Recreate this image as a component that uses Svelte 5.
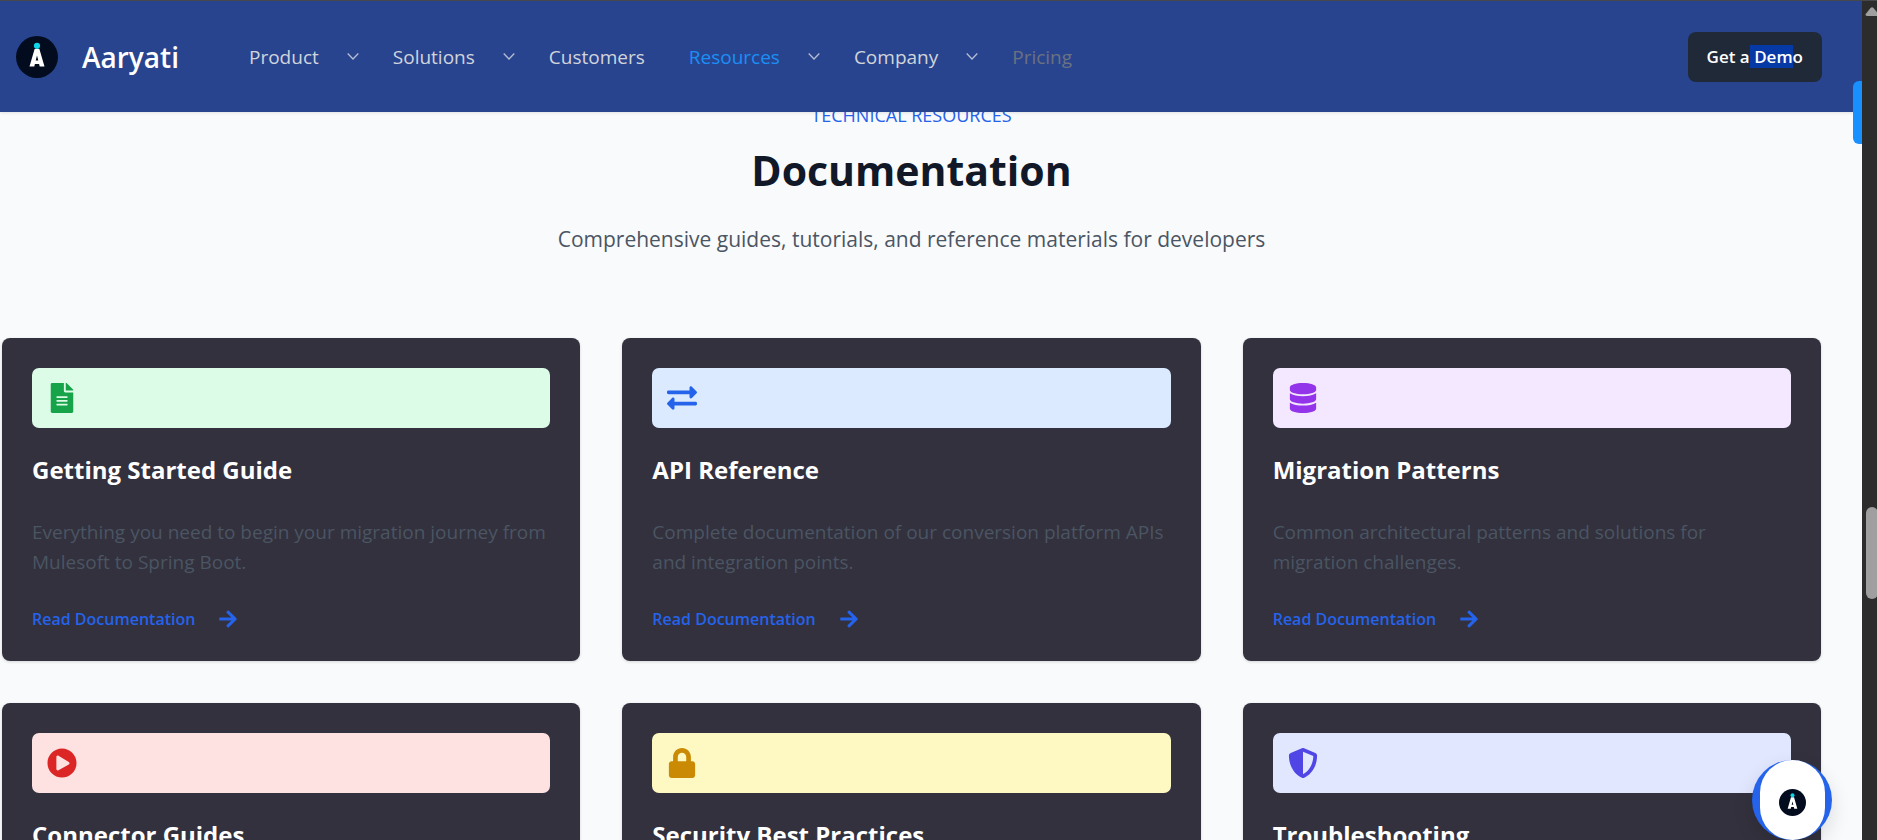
<script>
  const nav = [
    { label: 'Product', menu: true },
    { label: 'Solutions', menu: true },
    { label: 'Customers', menu: false },
    { label: 'Resources', menu: true, state: 'active' },
    { label: 'Company', menu: true },
    { label: 'Pricing', menu: false, state: 'muted' }
  ];

  const cards = [
    {
      title: 'Getting Started Guide',
      text: 'Everything you need to begin your migration journey from Mulesoft to Spring Boot.',
      tone: 'green',
      box: '-64 0 512 512',
      path: 'M224 136V0H24C10.7 0 0 10.7 0 24v464c0 13.3 10.7 24 24 24h336c13.3 0 24-10.7 24-24V160H248c-13.2 0-24-10.8-24-24zm64 236c0 6.6-5.4 12-12 12H108c-6.6 0-12-5.4-12-12v-8c0-6.6 5.4-12 12-12h168c6.6 0 12 5.4 12 12v8zm0-64c0 6.6-5.4 12-12 12H108c-6.6 0-12-5.4-12-12v-8c0-6.6 5.4-12 12-12h168c6.6 0 12 5.4 12 12v8zm0-72v8c0 6.6-5.4 12-12 12H108c-6.6 0-12-5.4-12-12v-8c0-6.6 5.4-12 12-12h168c6.6 0 12 5.4 12 12zm96-114.1v6.1H256V0h6.1c6.4 0 12.5 2.5 17 7l97.9 98c4.5 4.5 7 10.6 7 16.9z'
    },
    {
      title: 'API Reference',
      text: 'Complete documentation of our conversion platform APIs and integration points.',
      tone: 'blue',
      box: '0 0 512 512',
      path: 'M0 168v-16c0-13.255 10.745-24 24-24h360V80c0-21.367 25.899-32.042 40.971-16.971l80 80c9.372 9.373 9.372 24.569 0 33.941l-80 80C409.956 271.982 384 261.456 384 240v-48H24c-13.255 0-24-10.745-24-24zm488 152H128v-48c0-21.314-25.862-32.08-40.971-16.971l-80 80c-9.372 9.373-9.372 24.569 0 33.941l80 80C102.057 463.997 128 453.437 128 432v-48h360c13.255 0 24-10.745 24-24v-16c0-13.255-10.745-24-24-24z'
    },
    {
      title: 'Migration Patterns',
      text: 'Common architectural patterns and solutions for migration challenges.',
      tone: 'purple',
      box: '-32 0 512 512',
      path: 'M448 73.143v45.714C448 159.143 347.667 192 224 192S0 159.143 0 118.857V73.143C0 32.857 100.333 0 224 0s224 32.857 224 73.143zM448 176v102.857C448 319.143 347.667 352 224 352S0 319.143 0 278.857V176c48.125 33.143 136.208 48.572 224 48.572S399.874 209.143 448 176zm0 160v102.857C448 479.143 347.667 512 224 512S0 479.143 0 438.857V336c48.125 33.143 136.208 48.572 224 48.572S399.874 369.143 448 336z'
    },
    {
      title: 'Connector Guides',
      text: '',
      tone: 'red',
      box: '0 0 512 512',
      path: 'M256 8C119 8 8 119 8 256s111 248 248 248 248-111 248-248S393 8 256 8zm115.7 272l-176 101c-15.8 8.8-35.7-2.5-35.7-21V152c0-18.4 19.8-29.8 35.7-21l176 107c16.4 9.2 16.4 32.9 0 42z'
    },
    {
      title: 'Security Best Practices',
      text: '',
      tone: 'yellow',
      box: '-32 0 512 512',
      path: 'M400 224h-24v-72C376 68.2 307.8 0 224 0S72 68.2 72 152v72H48c-26.5 0-48 21.5-48 48v192c0 26.5 21.5 48 48 48h352c26.5 0 48-21.5 48-48V272c0-26.5-21.5-48-48-48zm-104 0H152v-72c0-39.7 32.3-72 72-72s72 32.3 72 72v72z'
    },
    {
      title: 'Troubleshooting',
      text: '',
      tone: 'indigo',
      box: '0 0 512 512',
      path: 'M466.5 83.7l-192-80a48.15 48.15 0 0 0-36.9 0l-192 80C27.7 91.1 16 108.6 16 128c0 198.5 114.5 335.7 221.5 380.3 11.8 4.9 25.1 4.9 36.9 0C360.1 472.6 496 349.3 496 128c0-19.4-11.7-36.9-29.5-44.3zM256.1 446.3l-.1-381 175.9 73.3c-3.3 151.4-82.1 261.1-175.8 307.7z'
    }
  ];
</script>

{#snippet logo()}
  <svg class="logo" viewBox="0 0 42 42" aria-hidden="true">
    <circle cx="21" cy="21" r="21" fill="#020c1e" />
    <path fill="#fff" fill-rule="evenodd" d="M18.6 13h4.8l5.1 17.6h-4.8l-.6-2.5h-4.2l-.6 2.5h-4.8zM21 19.6l-1.3 5h2.6z" />
    <circle cx="21" cy="9.8" r="3.1" fill="#11d5ea" />
  </svg>
{/snippet}

<div class="window">
  <div class="page">
    <header>
      <a class="brand" href="#home">{@render logo()}<span>Aaryati</span></a>
      <nav aria-label="Main">
        {#each nav as item}
          <a class={['item', item.state]} href="#{item.label.toLowerCase()}">
            {item.label}
            {#if item.menu}
              <svg class="chevron" viewBox="0 0 12 12" aria-hidden="true"><path d="M.7 2.5 6 8l5.300-5.500" /></svg>
            {/if}
          </a>
        {/each}
      </nav>
      <button class="demo" type="button">Get a<span class="selected">{' Dem'}</span>o</button>
    </header>

    <main>
      <div class="intro">
        <p class="eyebrow">TECHNICAL RESOURCES</p>
        <h1>Documentation</h1>
        <p class="lead">Comprehensive guides, tutorials, and reference materials for developers</p>
      </div>
      <div class="grid">
        {#each cards as card}
          <article>
            <div class={['banner', card.tone]}>
              <svg viewBox={card.box} aria-hidden="true"><path d={card.path} /></svg>
            </div>
            <h2>{card.title}</h2>
            {#if card.text}
              <p>{card.text}</p>
              <a class="more" href="#docs">
                Read Documentation
                <svg viewBox="0 0 448 512" aria-hidden="true"><path d="M190.5 66.9l22.2-22.2c9.4-9.4 24.6-9.4 33.9 0L441 239c9.4 9.4 9.4 24.6 0 33.9L246.6 467.300c-9.4 9.4-24.6 9.4-33.9 0l-22.2-22.2c-9.5-9.5-9.3-25 .4-34.3L311.4 296H24c-13.3 0-24-10.7-24-24v-32c0-13.3 10.7-24 24-24h287.400L190.900 101.200c-9.8-9.3-10-24.8-.4-34.3z" /></svg>
              </a>
            {/if}
          </article>
        {/each}
      </div>
    </main>

    <div class="side-tab"></div>
    <button class="chat" type="button" aria-label="Open chat"><span>{@render logo()}</span></button>
  </div>

  <div class="scrollbar" aria-hidden="true">
    <svg viewBox="0 0 14 9"><path d="M2 9h10q2-.5 1.300-2L8.500 1Q7-.6 5.500 1L.7 7Q0 8.500 2 9z" /></svg>
    <div class="thumb"></div>
  </div>
</div>

<style>
  :global(body) {
    margin: 0;
    background: #f9fafc;
    font-family: 'Open Sans', 'Noto Sans', sans-serif;
  }
  h1, h2, p {
    margin: 0;
  }
  a {
    color: inherit;
    text-decoration: none;
  }
  button {
    border: 0;
    font: inherit;
    cursor: pointer;
  }
  .window {
    display: flex;
    height: 100vh;
    overflow: hidden;
  }
  .page {
    position: relative;
    flex: 1;
    min-width: 0;
    overflow: hidden;
  }

  header {
    position: relative;
    z-index: 1;
    box-sizing: border-box;
    display: flex;
    align-items: center;
    height: 112px;
    padding: 0 40px 0 16px;
    border-top: 1px solid #48484c;
    background: #29448f;
    box-shadow: 0 1px 3px rgb(0 0 0 / 10%);
  }
  .brand {
    display: flex;
    align-items: center;
    gap: 24px;
    width: 233px;
    flex: none;
    color: #fff;
    font-size: 28px;
    font-weight: 600;
  }
  .logo {
    display: block;
    width: 42px;
    height: 42px;
  }
  nav {
    display: flex;
    gap: 34px;
    flex: 1;
    color: #d1d5db;
    font-size: 19px;
  }
  .item {
    display: flex;
    align-items: center;
    gap: 28px;
  }
  .item:nth-child(3) {
    margin-right: 10px;
  }
  .active {
    color: #1b8ff5;
    font-weight: 500;
  }
  .muted {
    color: #6b7280;
  }
  .chevron {
    width: 12px;
    height: 12px;
    fill: none;
    stroke: #b4bdd2;
    stroke-width: 1.300;
  }
  .demo {
    height: 50px;
    padding: 0 19px;
    border-radius: 8px;
    background: #1f2937;
    color: #fff;
    font-size: 17px;
    font-weight: 600;
    white-space: pre;
  }
  .selected {
    background: #0539a6;
  }

  main {
    padding: 0 41px 0 2px;
  }
  .intro {
    display: flex;
    flex-direction: column;
    align-items: center;
    margin-top: -12px;
    margin-bottom: 81px;
    text-align: center;
  }
  .eyebrow {
    color: #2563eb;
    font-size: 18px;
    font-weight: 500;
    line-height: 30px;
  }
  h1 {
    padding: 15px 0;
    color: #111827;
    font-size: 41px;
    font-weight: 700;
    line-height: 50px;
  }
  .lead {
    padding-top: 11px;
    color: #4b5563;
    font-size: 21px;
    line-height: 36px;
  }
  .grid {
    display: grid;
    grid-template-columns: repeat(3, 1fr);
    gap: 42px;
  }
  article {
    padding: 30px;
    border-radius: 8px;
    background: #32313d;
    box-shadow: 0 1px 3px rgb(0 0 0 / 15%);
  }
  .banner {
    padding: 15px;
    border-radius: 7px;
  }
  .banner svg {
    display: block;
    width: 30px;
    height: 30px;
    fill: currentColor;
  }
  .green { background: #dcfce7; color: #16a34a; }
  .blue { background: #dbeafe; color: #2563eb; }
  .purple { background: #f3e8ff; color: #9333ea; }
  .red { background: #fee2e2; color: #dc2626; }
  .yellow { background: #fef9c3; color: #ca8a04; }
  .indigo { background: #e0e7ff; color: #4f46e5; }
  h2 {
    margin-top: 24px;
    color: #fff;
    font-size: 24px;
    font-weight: 700;
    line-height: 36px;
  }
  article p {
    margin: 29px 0 30px;
    color: #4b5563;
    font-size: 19px;
    line-height: 30px;
  }
  .more {
    display: flex;
    align-items: center;
    gap: 24px;
    color: #2563eb;
    font-size: 16px;
    font-weight: 600;
    line-height: 24px;
  }
  .more svg {
    width: 18px;
    height: 20px;
    fill: currentColor;
  }

  .side-tab {
    position: absolute;
    z-index: 2;
    top: 81px;
    right: 0;
    width: 9px;
    height: 63px;
    border-radius: 6px 0 0 6px;
    background: #1890ff;
  }
  .chat {
    position: absolute;
    right: 30px;
    bottom: 0;
    width: 80px;
    height: 80px;
    padding: 0 7px 0 8px;
    border-radius: 50%;
    background: #2563eb;
    box-shadow: 0 8px 20px rgb(0 0 0 / 12%);
  }
  .chat span {
    display: grid;
    place-items: center;
    height: 80px;
    padding-top: 4px;
    box-sizing: border-box;
    border-radius: 40px;
    background: #fff;
  }
  .chat .logo {
    width: 27px;
    height: 27px;
  }
  .scrollbar {
    flex: none;
    width: 15px;
    overflow: hidden;
    border-top: 1px solid #48484c;
    background: #2c2c2c;
  }
  .scrollbar svg {
    display: block;
    width: 14px;
    height: 9px;
    margin: 6px 0 0 3px;
    fill: #9f9f9f;
  }
  .thumb {
    width: 12px;
    height: 92px;
    margin: 491px 0 0 4px;
    border-radius: 6px;
    background: #9f9f9f;
  }
</style>
